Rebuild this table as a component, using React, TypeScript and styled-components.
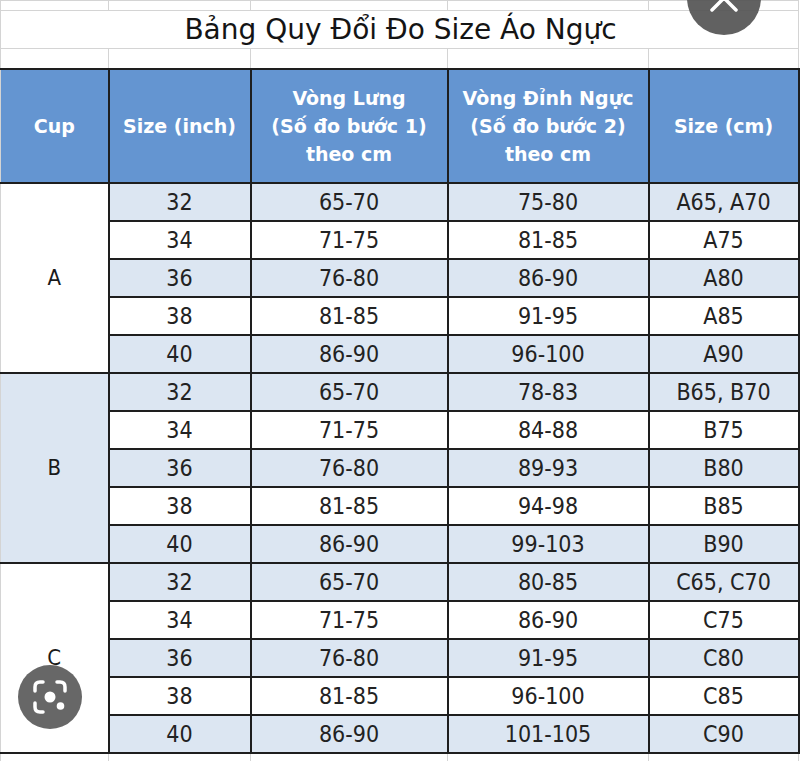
import React from "react";
import styled, { createGlobalStyle } from "styled-components";

const Global = createGlobalStyle`
  html, body { margin: 0; padding: 0; background: #fff; }
  body { font-family: "DejaVu Sans Condensed", "DejaVu Sans", sans-serif; font-stretch: condensed; }
`;

const DARK = "#1e1e1e";
const GRID = "#d4d4d4";
const BLUE = "#6495d1";
const LIGHT = "#dce6f2";

const Page = styled.div`
  position: relative;
  width: 800px;
  height: 775px;
  overflow: hidden;
  background: #fff;
`;

const Sheet = styled.table`
  border-collapse: collapse;
  table-layout: fixed;
  width: 798px;
  font-family: "DejaVu Sans Condensed", "DejaVu Sans", sans-serif;
  font-stretch: condensed;
`;

const Col = styled.col<{ $w: number }>`
  width: ${(p) => p.$w}px;
`;

const SpacerRow = styled.tr<{ $h: number }>`
  height: ${(p) => p.$h}px;
`;

const GridCell = styled.td<{ $noBottom?: boolean }>`
  border: 1px solid ${GRID};
  ${(p) => (p.$noBottom ? "border-bottom: none;" : "")}
  padding: 0;
`;

const TitleCell = styled.td`
  border: 1px solid ${GRID};
  padding: 0;
  text-align: center;
  font-family: "DejaVu Sans", sans-serif;
  font-stretch: normal;
  font-size: 28px;
  line-height: 36px;
  color: #141414;
  padding-left: 2px;
`;

const HeadRow = styled.tr`
  height: 114px;
`;

const HeadCell = styled.th`
  background: ${BLUE};
  color: #fff;
  font-family: "DejaVu Sans", sans-serif;
  font-stretch: normal;
  font-weight: bold;
  font-size: 19px;
  line-height: 28px;
  text-align: center;
  vertical-align: middle;
  border: 2px solid ${DARK};
  padding: 0;
  white-space: nowrap;
  &:first-child {
    border-left: 1px solid ${GRID};
  }
`;

const DataRow = styled.tr`
  height: 38px;
`;

const CupCell = styled.td<{ $shaded: boolean }>`
  background: ${(p) => (p.$shaded ? LIGHT : "#fff")};
  border: 2px solid ${DARK};
  border-left: 1px solid ${GRID};
  text-align: center;
  vertical-align: middle;
  font-size: 22px;
  color: #1a1a1a;
  padding: 0;
`;

const DataCell = styled.td<{ $shaded: boolean }>`
  background: ${(p) => (p.$shaded ? LIGHT : "#fff")};
  border: 2px solid ${DARK};
  text-align: center;
  vertical-align: middle;
  font-size: 23px;
  line-height: 34px;
  color: #222;
  padding: 0;
  white-space: nowrap;
`;

const CloseButton = styled.div`
  position: absolute;
  left: 687px;
  top: -39px;
  width: 74px;
  height: 74px;
  border-radius: 50%;
  background: rgba(85, 85, 85, 0.93);
`;

const LensButton = styled.div`
  position: absolute;
  left: 18px;
  top: 665px;
  width: 64px;
  height: 64px;
  border-radius: 50%;
  background: rgba(95, 95, 95, 0.95);
  display: flex;
`;

type Group = {
  cup: string;
  shaded: boolean;
  rows: [string, string, string, string][];
};

const groups: Group[] = [
  {
    cup: "A",
    shaded: false,
    rows: [
      ["32", "65-70", "75-80", "A65, A70"],
      ["34", "71-75", "81-85", "A75"],
      ["36", "76-80", "86-90", "A80"],
      ["38", "81-85", "91-95", "A85"],
      ["40", "86-90", "96-100", "A90"],
    ],
  },
  {
    cup: "B",
    shaded: true,
    rows: [
      ["32", "65-70", "78-83", "B65, B70"],
      ["34", "71-75", "84-88", "B75"],
      ["36", "76-80", "89-93", "B80"],
      ["38", "81-85", "94-98", "B85"],
      ["40", "86-90", "99-103", "B90"],
    ],
  },
  {
    cup: "C",
    shaded: false,
    rows: [
      ["32", "65-70", "80-85", "C65, C70"],
      ["34", "71-75", "86-90", "C75"],
      ["36", "76-80", "91-95", "C80"],
      ["38", "81-85", "96-100", "C85"],
      ["40", "86-90", "101-105", "C90"],
    ],
  },
];

const widths = [108, 142, 197, 201, 150];

export default function App() {
  return (
    <Page>
      <Global />
      <Sheet>
        <colgroup>
          {widths.map((w, i) => (
            <Col key={i} $w={w} />
          ))}
        </colgroup>
        <tbody>
          <SpacerRow $h={10}>
            {widths.map((_, i) => (
              <GridCell key={i} />
            ))}
          </SpacerRow>
          <SpacerRow $h={38}>
            <TitleCell colSpan={5}>Bảng Quy Đổi Đo Size Áo Ngực</TitleCell>
          </SpacerRow>
          <SpacerRow $h={20}>
            {widths.map((_, i) => (
              <GridCell key={i} />
            ))}
          </SpacerRow>
          <HeadRow>
            <HeadCell>Cup</HeadCell>
            <HeadCell>Size (inch)</HeadCell>
            <HeadCell>
              Vòng Lưng
              <br />
              (Số đo bước 1)
              <br />
              theo cm
            </HeadCell>
            <HeadCell>
              Vòng Đỉnh Ngực
              <br />
              (Số đo bước 2)
              <br />
              theo cm
            </HeadCell>
            <HeadCell>Size (cm)</HeadCell>
          </HeadRow>
          {groups.map((g) =>
            g.rows.map((r, i) => {
              const shaded = i % 2 === 0;
              return (
                <DataRow key={g.cup + i}>
                  {i === 0 && (
                    <CupCell rowSpan={5} $shaded={g.shaded}>
                      {g.cup}
                    </CupCell>
                  )}
                  {r.map((v, j) => (
                    <DataCell key={j} $shaded={shaded}>
                      {v}
                    </DataCell>
                  ))}
                </DataRow>
              );
            })
          )}
          <SpacerRow $h={8}>
            {widths.map((_, i) => (
              <GridCell key={i} $noBottom />
            ))}
          </SpacerRow>
        </tbody>
      </Sheet>

      <CloseButton>
        <svg width="74" height="74" viewBox="0 0 74 74">
          <path
            d="M25 25 L49 49 M49 25 L25 49"
            stroke="#fff"
            strokeWidth="3.5"
            strokeLinecap="round"
            fill="none"
          />
        </svg>
      </CloseButton>

      <LensButton>
        <svg width="64" height="64" viewBox="0 0 64 64">
          <g stroke="#fff" strokeWidth="3.5" strokeLinecap="round" fill="none">
            <path d="M17 26 V22 Q17 17 22 17 H25" />
            <path d="M39 17 H42 Q47 17 47 22 V26" />
            <path d="M17 38 V42 Q17 47 22 47 H25" />
          </g>
          <circle cx="32" cy="32" r="5.5" fill="#fff" />
          <circle cx="42.5" cy="41" r="3.8" fill="#fff" />
        </svg>
      </LensButton>
    </Page>
  );
}
